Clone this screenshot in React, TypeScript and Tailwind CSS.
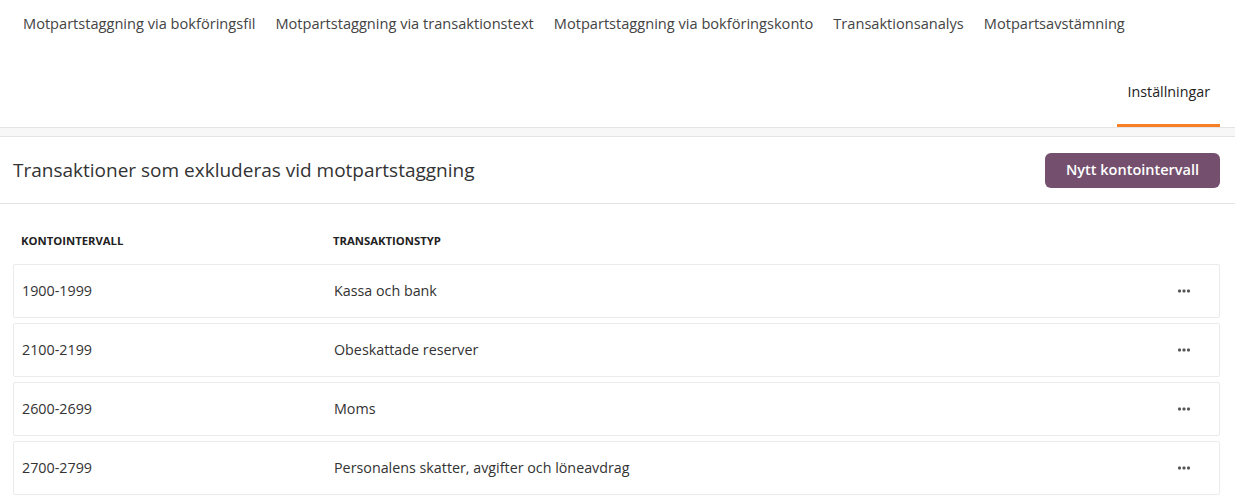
import React from 'react';

const tabs = [
  'Motpartstaggning via bokföringsfil',
  'Motpartstaggning via transaktionstext',
  'Motpartstaggning via bokföringskonto',
  'Transaktionsanalys',
  'Motpartsavstämning',
];

const rows = [
  { range: '1900-1999', type: 'Kassa och bank' },
  { range: '2100-2199', type: 'Obeskattade reserver' },
  { range: '2600-2699', type: 'Moms' },
  { range: '2700-2799', type: 'Personalens skatter, avgifter och löneavdrag' },
];

function MoreDots() {
  return (
    <svg width="14" height="4" viewBox="0 0 14 4" className="text-[#555]">
      <rect x="1" y="0.5" width="3" height="3" rx="1" fill="currentColor" />
      <rect x="5.5" y="0.5" width="3" height="3" rx="1" fill="currentColor" />
      <rect x="10" y="0.5" width="3" height="3" rx="1" fill="currentColor" />
    </svg>
  );
}

export default function App() {
  return (
    <div
      className="min-h-[501px] bg-white text-[#333]"
      style={{ fontFamily: '"Open Sans", Lato, sans-serif' }}
    >
      {/* flikar */}
      <nav className="pl-[13px] pr-[15px]">
        <div className="flex h-[47px] items-center">
          {tabs.map((t) => (
            <span key={t} className="px-[10px] text-[14.6px] text-[#444]">
              {t}
            </span>
          ))}
        </div>
        <div className="flex h-[80px] justify-end items-end">
          <span className="border-b-[3px] border-[#f58025] px-[10px] pb-[22px] text-[14.3px] text-[#222]">
            Inställningar
          </span>
        </div>
      </nav>
      <div className="h-[10px] border-y border-[#e4e4e4] bg-[#f7f7f7]" />

      {/* rubrik */}
      <div className="flex h-[67px] items-center justify-between border-b border-[#e4e4e4] pl-[13px] pr-[15px]">
        <h1 className="text-[19px] text-[#333]">Transaktioner som exkluderas vid motpartstaggning</h1>
        <button className="h-[35px] w-[175px] rounded-[6px] bg-[#74506e] text-[14.5px] font-semibold text-white">
          Nytt kontointervall
        </button>
      </div>

      {/* tabell */}
      <div className="pl-[13px] pr-[15px] pt-[14px]">
        <div className="flex h-[46px] items-center text-[11.3px] font-bold uppercase text-[#222]">
          <span className="w-[320px] pl-[8px]">Kontointervall</span>
          <span>Transaktionstyp</span>
        </div>
        <div className="flex flex-col gap-[5px]">
          {rows.map((r) => (
            <div
              key={r.range}
              className="flex h-[54px] items-center rounded-[2px] border border-[#ebebeb] text-[14.3px] text-[#333]"
            >
              <span className="w-[320px] pl-[8px]">{r.range}</span>
              <span className="flex-1">{r.type}</span>
              <span className="pr-[28px]">
                <MoreDots />
              </span>
            </div>
          ))}
        </div>
      </div>
    </div>
  );
}
